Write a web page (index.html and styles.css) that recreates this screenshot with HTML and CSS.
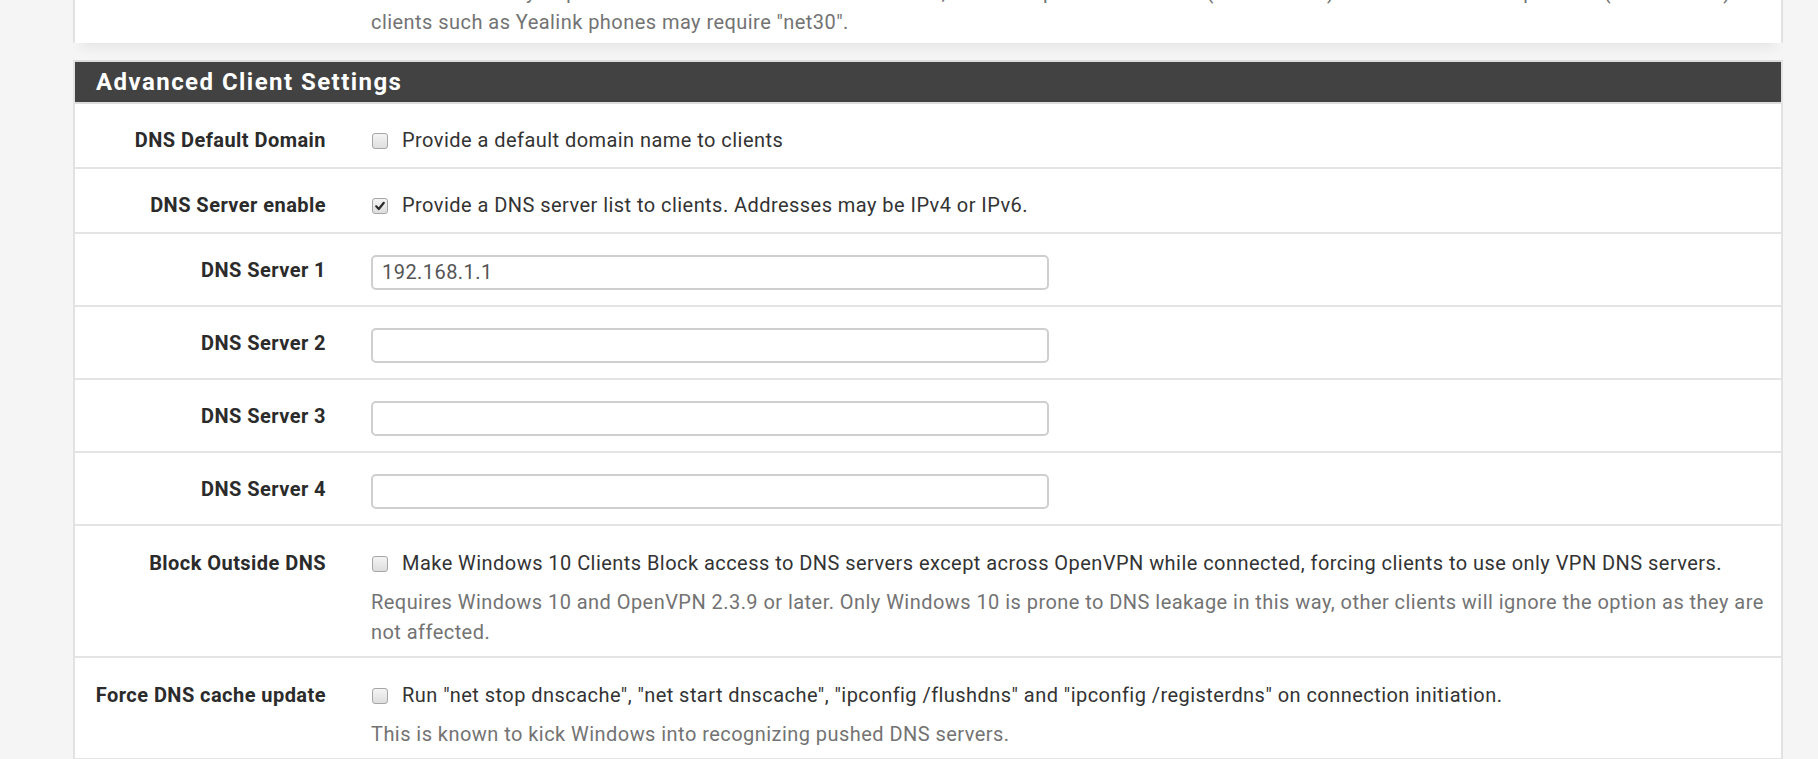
FILE: index.html
```html
<!DOCTYPE html>
<html lang="en">
<head>
<meta charset="utf-8">
<title>Advanced Client Settings</title>
<link rel="stylesheet" href="styles.css">
</head>
<body>
<div class="page">
  <div class="panel panel-top">
    <div class="top-help">Some clients may require this be set to "subnet" even for IPv6, such as OpenVPN Connect (iOS/Android). Older versions of OpenVPN (before 2.0.9) or<br>clients such as Yealink phones may require "net30".</div>
  </div>

  <div class="panel panel-main">
    <div class="panel-heading"><h2 class="panel-title">Advanced Client Settings</h2></div>
    <div class="panel-body">
      <div class="row row-check">
        <div class="label">DNS Default Domain</div>
        <div class="content"><span class="cb"></span><span class="cb-text">Provide a default domain name to clients</span></div>
      </div>
      <div class="row row-check">
        <div class="label">DNS Server enable</div>
        <div class="content"><span class="cb checked"><svg viewBox="0 0 16 16" width="16" height="16"><path d="M4.2 8.3 L6.8 11 L11.8 4.8" fill="none" stroke="#2b2b2b" stroke-width="2.2" stroke-linecap="round" stroke-linejoin="round"/></svg></span><span class="cb-text">Provide a DNS server list to clients. Addresses may be IPv4 or IPv6.</span></div>
      </div>
      <div class="row row-input">
        <div class="label">DNS Server 1</div>
        <div class="content"><div class="input">192.168.1.1</div></div>
      </div>
      <div class="row row-input">
        <div class="label">DNS Server 2</div>
        <div class="content"><div class="input"></div></div>
      </div>
      <div class="row row-input">
        <div class="label">DNS Server 3</div>
        <div class="content"><div class="input"></div></div>
      </div>
      <div class="row row-input">
        <div class="label">DNS Server 4</div>
        <div class="content"><div class="input"></div></div>
      </div>
      <div class="row row-help">
        <div class="label">Block Outside DNS</div>
        <div class="content">
          <div><span class="cb"></span><span class="cb-text">Make Windows 10 Clients Block access to DNS servers except across OpenVPN while connected, forcing clients to use only VPN DNS servers.</span></div>
          <div class="help">Requires Windows 10 and OpenVPN 2.3.9 or later. Only Windows 10 is prone to DNS leakage in this way, other clients will ignore the option as they are not affected.</div>
        </div>
      </div>
      <div class="row row-help">
        <div class="label">Force DNS cache update</div>
        <div class="content">
          <div><span class="cb"></span><span class="cb-text">Run "net stop dnscache", "net start dnscache", "ipconfig /flushdns" and "ipconfig /registerdns" on connection initiation.</span></div>
          <div class="help">This is known to kick Windows into recognizing pushed DNS servers.</div>
        </div>
      </div>
    </div>
  </div>
</div>
</body>
</html>
```

FILE: styles.css
```css
html, body {
  margin: 0;
  padding: 0;
}
body {
  background: #f5f5f5;
  font-family: Roboto, "Liberation Sans", Arial, sans-serif;
  font-size: 20px;
  letter-spacing: 0.45px;
  line-height: 25px;
  color: #333;
  overflow: hidden;
  height: 759px;
}
.page {
  padding: 0 35px 0 73px;
}
.panel {
  background: #fff;
  border-left: 2px solid #e2e2e2;
  border-right: 2px solid #e2e2e2;
}
.panel-top {
  margin-top: -31px;
  padding: 8px 18px 6px 296px;
  box-shadow: 0 12px 12px -8px rgba(0, 0, 0, 0.07);
}
.top-help {
  color: #737373;
  line-height: 30px;
  white-space: nowrap;
}
.panel-main {
  margin-top: 17px;
}
.panel-heading {
  background: #424242;
  border-top: 2px solid #dcdcdc;
  border-bottom: 2px solid #dcdcdc;
  height: 40px;
  padding-left: 21px;
}
.panel-title {
  margin: 0;
  font-size: 24px;
  line-height: 40px;
  font-weight: 700;
  color: #fff;
  letter-spacing: 1.45px;
}
.row {
  display: grid;
  grid-template-columns: 251px 1fr;
  column-gap: 45px;
  padding-right: 16px;
  border-bottom: 2px solid #e4e4e4;
}
.label {
  text-align: right;
  font-weight: 700;
  color: #2b2b2b;
}
.row-check {
  padding-top: 24px;
  padding-bottom: 14px;
}
.row-input {
  padding-top: 21px;
  padding-bottom: 15px;
}
.row-input .label {
  padding-top: 3px;
}
.row-help {
  padding-top: 25px;
  padding-bottom: 9px;
}
.content {
  min-width: 0;
}
.cb {
  display: inline-block;
  box-sizing: border-box;
  width: 16px;
  height: 16px;
  border: 1px solid #a6a6a6;
  border-radius: 3px;
  background: linear-gradient(#f4f4f4, #dedede);
  vertical-align: -2px;
  margin-left: 1px;
  margin-right: 14px;
}
.cb svg {
  display: block;
  margin: -1px;
}
.input {
  box-sizing: border-box;
  width: 678px;
  height: 35px;
  border: 2px solid #cfcfcf;
  border-radius: 5px;
  padding: 3px 9px;
  color: #555;
  line-height: 25px;
  background: #fff;
}
.help {
  color: #737373;
  margin-top: 11px;
  line-height: 30px;
}
```
